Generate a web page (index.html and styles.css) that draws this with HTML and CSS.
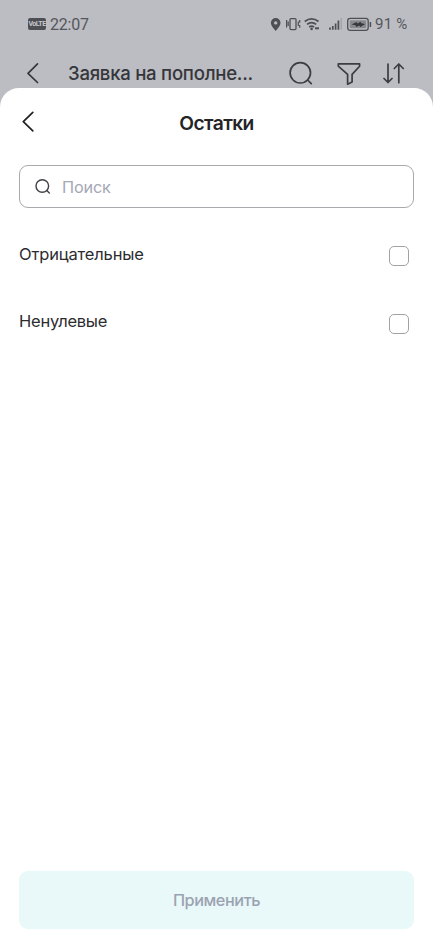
FILE: index.html
```html
<!DOCTYPE html>
<html lang="ru">
<head>
<meta charset="utf-8">
<meta name="viewport" content="width=device-width, initial-scale=1">
<title>Остатки</title>
<link rel="stylesheet" href="styles.css">
</head>
<body>
<div class="status">
  <span class="volte">VoLTE</span>
  <span class="time">22:07</span>
  <svg class="status-icons" viewBox="270 14 102 20" fill="none" stroke="#4e4f54">
    <path d="M275.7 18a4.8 4.8 0 0 0-4.8 4.9c0 3 2.6 5.2 4.8 8.1 2.2-2.9 4.800-5.100 4.800-8.100a4.800 4.800 0 0 0-4.800-4.900zm0 3.200a1.700 1.700 0 1 1 0 3.400 1.700 1.700 0 0 1 0-3.400z" fill="#4e4f54" fill-rule="evenodd" stroke="none"/>
    <rect x="290" y="18.6" width="6" height="11" rx="1" stroke-width="1.3"/>
    <path d="M286.600 20v7.500M288.200 21.500v4.500M299.700 20v2.800M299.700 25v2.800M298.300 21.500v4.500" stroke-width="1.200"/>
    <path d="M304.700 21.500q6.900-5.400 13.800 0M307 24.400q4.600-3.600 9.200 0M309.200 27q2.400-1.900 4.800 0" stroke-width="1.700"/>
    <circle cx="311.600" cy="28.900" r="1.300" fill="#4e4f54" stroke="none"/>
    <path d="M315 28.300h4" stroke-width="2"/>
    <path d="M330 27.500v2.300M332.800 26v3.800M335.600 23.500v6.300M338.400 20.500v9.300" stroke-width="1.700"/>
    <path d="M341.200 18v11.800" stroke="#a2a3a8" stroke-width="1.400"/>
    <rect x="347.700" y="18.300" width="20.500" height="12" rx="2.500" stroke-width="1.300"/>
    <rect x="349.700" y="20.300" width="16.500" height="8" rx="1" fill="#88898e" stroke="none"/>
    <path d="M351.500 24.500l5-2.500 1 1.400 3-1.700.8 1.600 4 .7-5 3-1-1.500-3 1.600-.8-1.800z" fill="#37383d" stroke="none"/>
    <path d="M370.400 22v5" stroke-width="1.500"/>
  </svg>
  <span class="percent">91 %</span>
</div>
<header class="appbar">
  <svg class="back" viewBox="0 0 14 24"><path d="M11.500 2.800L2 12.300l9.500 9.200"/></svg>
  <div class="appbar-title">Заявка на пополне...</div>
  <svg class="tools" viewBox="288 60 118 28">
    <circle cx="300.300" cy="72.800" r="10.200"/>
    <path d="M307.600 80l3.700 3.700"/>
    <path d="M338.300 63.900h21.300v2.300l-7.500 8.200v7.500l-4.500 2.400v-9.900l-9.300-8.200z"/>
    <path d="M388 64v18.400M384 78.500l4 4 4-4M398.800 82.700V64.300M394.300 68.500l4.500-4.500 4.500 4.500"/>
  </svg>
</header>
<main class="sheet">
  <div class="sheet-head">
    <svg class="back dark" viewBox="0 0 14 24"><path d="M11.800 2.300L2.300 11.700l9.500 9.200"/></svg>
    <h1>Остатки</h1>
  </div>
  <label class="search">
    <svg viewBox="0 0 18 18"><circle cx="8.300" cy="8" r="6.300"/><path d="M12.800 12.500l2.500 2.500"/></svg>
    <span>Поиск</span>
  </label>
  <div class="option"><span class="negative">Отрицательные</span><i class="box"></i></div>
  <div class="option"><span class="nonzero">Ненулевые</span><i class="box"></i></div>
  <button class="apply">Применить</button>
</main>
</body>
</html>
```
FILE: styles.css
```css
* { box-sizing: border-box; }
body {
  margin: 0;
  height: 938px;
  display: flex;
  flex-direction: column;
  overflow: hidden;
  background: #bcbdc2;
  font-family: Inter, "Liberation Sans", sans-serif;
  color: #2c2c2f;
}
svg { display: block; flex: none; }
.status {
  height: 48px;
  padding-left: 28px;
  display: flex;
  align-items: center;
  color: #55565b;
  font-family: Roboto, sans-serif;
}
.volte {
  width: 18px;
  height: 12px;
  border-radius: 2px;
  background: #4e4f54;
  color: #c6c7cc;
  font: 700 7px/12px "Roboto", sans-serif;
  letter-spacing: -0.5px;
  text-align: center;
}
.time { width: 60px; margin-left: 4px; font-size: 16px; letter-spacing: -0.2px; }
.status-icons { width: 102px; height: 20px; margin-left: 160px; }
.percent { margin-left: 3px; font-size: 15px; letter-spacing: 0.2px; white-space: nowrap; }
.appbar { height: 40px; padding-left: 26px; display: flex; align-items: flex-start; }
.back {
  width: 14px;
  height: 24px;
  margin-top: 13px;
  fill: none;
  stroke: #35363b;
  stroke-width: 1.7;
  stroke-linecap: round;
  stroke-linejoin: round;
}
.appbar-title {
  width: 220px;
  margin-left: 28px;
  font-size: 18.6px;
  line-height: 24px;
  padding-top: 13px;
  font-weight: 500;
  letter-spacing: -0.27px;
  color: #35363b;
  white-space: nowrap;
}
.tools {
  width: 118px;
  height: 28px;
  margin-top: 12px;
  fill: none;
  stroke: #3c3d42;
  stroke-width: 1.7;
  stroke-linecap: round;
  stroke-linejoin: round;
}
.sheet {
  flex: 1;
  display: flex;
  flex-direction: column;
  padding: 0 19px 9px;
  border-radius: 19px 19px 0 0;
  background: #fff;
}
.sheet-head { display: flex; height: 77px; }
.back.dark { margin: 22px 0 0 2px; stroke: #202023; }
h1 {
  flex: 1;
  margin: 23px 16px 0 0;
  font-size: 19.2px;
  line-height: 24px;
  font-weight: 600;
  letter-spacing: -0.6px;
  text-align: center;
  color: #242427;
}
.search {
  height: 43px;
  flex: none;
  display: flex;
  align-items: center;
  padding-left: 14px;
  border: 1px solid #a9a9ad;
  border-radius: 9px;
  color: #a5a8b5;
  font-size: 16.3px;
  letter-spacing: -0.2px;
}
.search svg { width: 18px; height: 18px; fill: none; stroke: #404045; stroke-width: 1.400; stroke-linecap: round; }
.search span { margin: 0 0 0 10px; }
.option {
  display: flex;
  justify-content: space-between;
  height: 67.600px;
  padding: 34px 5px 0 0;
  font-size: 16.5px;
  line-height: 24px;
  letter-spacing: -0.16px;
}
.nonzero { letter-spacing: -0.25px; margin-top: -0.800px; }
.box { width: 20px; height: 20px; margin-top: 4px; border: 1px solid #a2a2a5; border-radius: 5px; }
.apply {
  height: 58px;
  margin: auto 0 0;
  border: 0;
  border-radius: 9px;
  background: #e9f8f9;
  color: #9ba3b1;
  font: 500 16.3px/24px Inter, sans-serif;
  letter-spacing: -0.45px;
}
```
